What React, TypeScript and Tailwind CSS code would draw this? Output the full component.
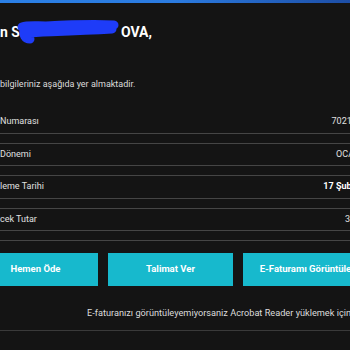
import React from "react";

const rows: { label: string; value: string; bold?: boolean }[] = [
  { label: "Numarası", value: "70212345" },
  { label: "Dönemi", value: "OCAK 24" },
  { label: "leme Tarihi", value: "17 Şubat 24", bold: true },
  { label: "cek Tutar", value: "345,60" },
];

export default function App() {
  return (
    <div
      className="w-[350px] h-[350px] overflow-hidden bg-[#141414] text-[#e2e2e2]"
      style={{ fontFamily: "Roboto, 'Liberation Sans', Arial, sans-serif" }}
    >
      <div className="h-[3px] w-full bg-gradient-to-r from-[#2b80e6] via-[#2b7be0] to-[#1d4ea6]" />
      <div className="pt-[18px] h-[22px] box-content flex items-center text-[14px] font-bold text-white leading-none whitespace-nowrap">
        <span>n S</span>
        <span className="relative inline-block w-[101px] h-[14px]">
          <svg
            className="absolute left-[-4px] top-[-8px]"
            width="104"
            height="28"
            viewBox="0 0 104 28"
          >
            <path
              d="M6 10 C 12 8, 20 9, 30 9 C 50 8, 75 7, 98 8 M 8 12 C 7 18, 9 22, 14 22 M 10 16 C 30 15, 60 14, 96 12"
              stroke="#1e3cf8"
              strokeWidth="9"
              strokeLinecap="round"
              fill="none"
            />
          </svg>
        </span>
        <span>OVA,</span>
      </div>
      <div className="mt-[35px] text-[9px] leading-[12px] text-[#dcdcdc]">
        bilgileriniz aşağıda yer almaktadir.
      </div>
      <div className="mt-[21px] w-[372px] text-[9px] text-[#e0e0e0]">
        {rows.map((r, i) => (
          <div key={i}>
            <div className="h-[22.5px] flex items-center justify-between border-b border-[#454545]">
              <span>{r.label}</span>
              <span className={r.bold ? "font-bold text-white" : ""}>{r.value}</span>
            </div>
            <div className="h-[10px] border-b border-[#454545]" />
          </div>
        ))}
      </div>
      <div className="mt-[12px] ml-[-27px] flex gap-[10px] whitespace-nowrap">
        <div className="w-[125px] h-[33px] shrink-0 bg-[#17b9cd] flex items-center justify-center text-[9.5px] font-bold text-white">
          Hemen Öde
        </div>
        <div className="w-[125px] h-[33px] shrink-0 bg-[#17b9cd] flex items-center justify-center text-[9.5px] font-bold text-white">
          Talimat Ver
        </div>
        <div className="w-[125px] h-[33px] shrink-0 bg-[#17b9cd] flex items-center justify-center text-[9.5px] font-bold text-white">
          E-Faturamı Görüntüle
        </div>
      </div>
      <div className="mt-[21px] pl-[87px] text-[9.2px] leading-[12px] text-[#dcdcdc] whitespace-nowrap">
        E-faturanızı görüntüleyemiyorsaniz Acrobat Reader yüklemek için tıklayınız.
      </div>
      <div className="mt-[11px] h-px bg-[#3a3a3a]" />
    </div>
  );
}
